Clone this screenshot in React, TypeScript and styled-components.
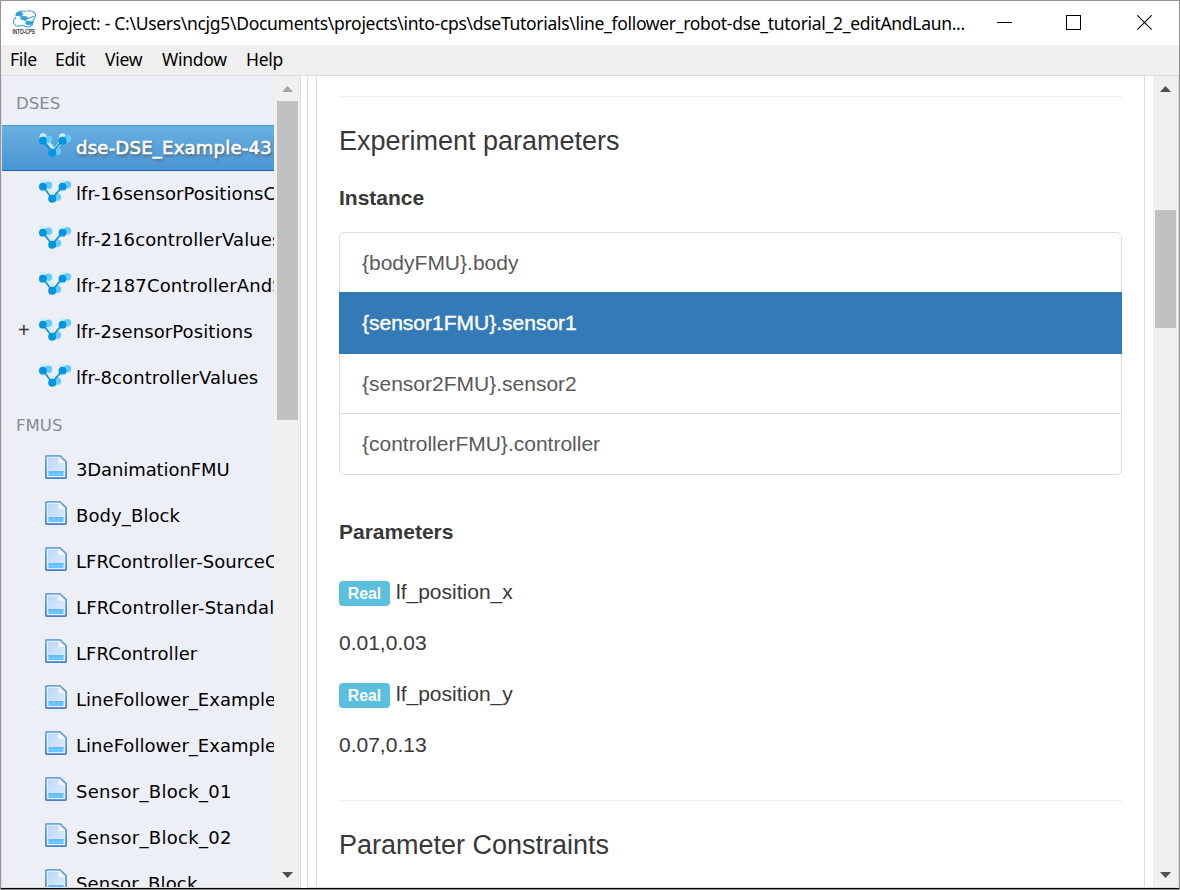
import React from "react";
import styled, { createGlobalStyle } from "styled-components";

const GlobalStyle = createGlobalStyle`
  * { box-sizing: border-box; }
  body { margin: 0; overflow: hidden; }
`;

const AppWindow = styled.div`
  width: 1180px;
  height: 890px;
  display: flex;
  flex-direction: column;
  background: #fff;
  border: 1px solid #949494;
  overflow: hidden;
`;

const TitleBar = styled.header`
  height: 44px;
  flex: none;
  display: flex;
  align-items: center;
  padding-left: 11px;
  font-family: "Noto Sans", "Open Sans", sans-serif;
  font-size: 17.5px;
  color: #000;
`;

const TitleText = styled.div`
  width: 941px;
  flex: none;
  padding: 0 0 1px 4px;
  white-space: nowrap;
  letter-spacing: -0.3px;
`;

const WindowControls = styled.div`
  display: flex;
  gap: 54px;
  padding-left: 19px;
`;

const MenuBar = styled.nav`
  height: 31px;
  flex: none;
  display: flex;
  padding-left: 9px;
  line-height: 29px;
  background: #efefef;
  border-bottom: 1px solid #dcdcdc;
  font-family: "Noto Sans", "Open Sans", sans-serif;
  font-size: 17.5px;
  color: #000;
`;

const MenuItem = styled.span<{ $width: number }>`
  width: ${(p) => p.$width}px;
  letter-spacing: -0.25px;
`;

const Workspace = styled.div`
  flex: 1;
  min-height: 0;
  display: flex;
  border-bottom: 1px solid #000;
`;

const Sidebar = styled.aside`
  width: 300px;
  flex: none;
  display: flex;
  background: #eceff5;
  border-left: 1px solid #dcdcdc;
  border-right: 1px solid #dcdcdc;
  border-bottom: 1px solid #dcdcdc;
`;

const Tree = styled.div`
  width: 272px;
  flex: none;
  padding-top: 3px;
  overflow: hidden;
  font-family: "DejaVu Sans", Verdana, sans-serif;
  font-size: 18px;
`;

const GroupTitle = styled.div`
  height: 46px;
  padding-left: 14px;
  line-height: 50px;
  font-size: 16.6px;
  color: #868b92;
`;

const Node = styled.div<{ $selected?: boolean }>`
  height: 46px;
  display: flex;
  align-items: center;
  border-top: 1px solid ${(p) => (p.$selected ? "#4b93cf" : "transparent")};
  border-bottom: 1px solid ${(p) => (p.$selected ? "#1f65ad" : "transparent")};
  background: ${(p) => (p.$selected ? "linear-gradient(#69b0e0, #4a95d3)" : "none")};
  color: ${(p) => (p.$selected ? "#fff" : "#000")};
  text-shadow: ${(p) => (p.$selected ? "1px 2px 3px #555" : "none")};
  -webkit-text-stroke: ${(p) => (p.$selected ? "0.6px #fff" : "0")};
`;

const Expander = styled.span`
  width: 36px;
  flex: none;
  padding: 0 0 3px 16px;
  font-family: "Liberation Sans", Arial, sans-serif;
  font-size: 20px;
  color: #333;
`;

const NodeIcon = styled.span`
  width: 38px;
  flex: none;
  display: flex;
  height: 44px;
`;

const NodeLabel = styled.span<{ $spacing?: number }>`
  padding-bottom: 2px;
  white-space: nowrap;
  letter-spacing: ${(p) => p.$spacing ?? 0}px;
`;

const ScrollTrack = styled.div<{ $width: number; $left: number; $right: number }>`
  width: ${(p) => p.$width}px;
  flex: none;
  display: flex;
  flex-direction: column;
  align-items: stretch;
  padding: 0 ${(p) => p.$right}px 0 ${(p) => p.$left}px;
  background: #f0f0f0;
`;

const ScrollArrow = styled.div`
  height: 25px;
  flex: none;
  display: flex;
  align-items: center;
  justify-content: center;
`;

const ScrollThumb = styled.div<{ $top: number; $height: number }>`
  margin-top: ${(p) => p.$top}px;
  height: ${(p) => p.$height}px;
  flex: none;
  background: #c1c1c1;
`;

const Spacer = styled.div`
  flex: 1;
`;

const MainPane = styled.main`
  flex: 1;
  display: flex;
  margin-left: 6px;
  border: solid #dcdcdc;
  border-width: 0 1px 1px 1px;
`;

const Content = styled.div`
  width: 829px;
  margin: 0 8px;
  padding: 20px 22px 0;
  border: solid #dcdcdc;
  border-width: 0 1px;
  overflow: hidden;
  font-family: "Liberation Sans", Arial, sans-serif;
  font-size: 21px;
  color: #383838;
`;

const Rule = styled.div`
  height: 1px;
  background: #eee;
`;

const SectionTitle = styled.h2`
  margin: 0;
  height: 86px;
  line-height: 88px;
  font-size: 27px;
  font-weight: 400;
`;

const FieldTitle = styled.h3`
  margin: 0;
  height: 30px;
  line-height: 30px;
  font-size: 21px;
  font-weight: 700;
`;

const InstanceList = styled.div`
  margin: 19px 0 42px;
  border: 1px solid #ddd;
  border-radius: 5px;
`;

const InstanceItem = styled.div<{ $active?: boolean; $divided?: boolean; $height: number }>`
  height: ${(p) => p.$height}px;
  line-height: ${(p) => (p.$active ? 62 : 60)}px;
  margin: 0 ${(p) => (p.$active ? "-1px" : "0")};
  padding-left: ${(p) => (p.$active ? 23 : 22)}px;
  border-top: ${(p) => (p.$divided ? "1px solid #ddd" : "0")};
  background: ${(p) => (p.$active ? "#337ab7" : "transparent")};
  color: ${(p) => (p.$active ? "#fff" : "#595959")};
  -webkit-text-stroke: ${(p) => (p.$active ? "0.4px #fff" : "0")};
`;

const ParameterList = styled.div`
  padding: 19px 0 30px;
`;

const ParameterRow = styled.div`
  height: 51px;
  display: flex;
  align-items: center;
  gap: 6px;
`;

const TypeLabel = styled.span`
  width: 51px;
  height: 25px;
  margin-top: 3px;
  line-height: 25px;
  border-radius: 4px;
  background: #5bc0de;
  color: #fff;
  font-size: 15.8px;
  font-weight: 700;
  text-align: center;
`;

const Logo = () => (
  <svg width="25" height="26" viewBox="0 0 25 26">
    <g transform="translate(0 -.8)">
      <g fill="none" stroke="#36a0d8" strokeWidth="1.1">
        <path d="M4 6.500C5 2 10 1 14 2.500M15 1.700C21 1 25 4 23 8S20 12 21 14" />
        <path d="M4 8C0 11 1 15 4 16.500C8 18 10 15 13 17C16 18.500 22 17 21 12" />
        <path d="M7 4L11 10L17 13.500M3.500 6L10 7M22 7L14 10" />
      </g>
      <g fill="#36a0d8">
        <ellipse cx="7.500" cy="4.700" rx="3.600" ry="2.100" />
        <ellipse cx="12" cy="8.900" rx="3.800" ry="2.100" />
        <ellipse cx="17" cy="13.700" rx="3.600" ry="2.100" />
      </g>
    </g>
    <text x="0.500" y="23.500" fontFamily="Liberation Sans" fontSize="7" fill="#222" stroke="#222" strokeWidth=".2" textLength="22.500" lengthAdjust="spacingAndGlyphs">INTO-CPS</text>
  </svg>
);

const DseIcon = () => (
  <svg width="34" height="44" viewBox="0 0 34 44">
    <g fill="#cdeeff">
      <path d="M6 11L16.500 24L26 12" fill="none" stroke="#cdeeff" strokeWidth="3" />
      <circle cx="5" cy="10.800" r="3.500" />
      <circle cx="24.500" cy="10.800" r="3.500" />
    </g>
    <g fill="#66ccff">
      <circle cx="10.500" cy="13.200" r="3.800" />
      <circle cx="29.500" cy="12.800" r="3.700" />
      <circle cx="19.500" cy="25.200" r="3.700" />
    </g>
    <path d="M5 14.500L14 26.500L24.500 14.500" fill="none" stroke="#0b91dd" strokeWidth="1.700" />
    <g fill="#0494e0">
      <circle cx="4.900" cy="14.700" r="3.900" />
      <circle cx="24.500" cy="14.700" r="3.900" />
      <circle cx="14.200" cy="26.800" r="4" />
    </g>
  </svg>
);

const FmuIcon = () => (
  <svg width="34" height="44" viewBox="0 0 34 44">
    <defs>
      <linearGradient id="page" x1="0" y1="0" x2="1" y2="1">
        <stop offset="0" stopColor="#bcd7fb" />
        <stop offset="1" stopColor="#dfedfe" />
      </linearGradient>
      <linearGradient id="edge" x1="0" y1="0" x2="0" y2="1">
        <stop offset="0" stopColor="#6ba4e0" />
        <stop offset="1" stopColor="#4a7cc8" />
      </linearGradient>
    </defs>
    <path d="M8.500 7.900H22L28.100 13.500V29.500Q28.100 30.100 27.500 30.100H8.500Q7.900 30.100 7.900 29.500V8.500Q7.900 7.900 8.500 7.900Z" fill="#e6f1ff" stroke="url(#edge)" strokeWidth="1.700" />
    <path d="M10 10H20.500V15H26V28.500H10Z" fill="url(#page)" />
    <path d="M21 9.500V14.500H26.500Z" fill="#f8fcff" />
    <rect x="10.500" y="23.500" width="15" height="4.500" fill="#6bc8ff" />
    <path d="M10.500 23.800H25.500" stroke="#4bb0f7" />
  </svg>
);

const Arrow = ({ down, color = "#505050" }: { down?: boolean; color?: string }) => (
  <svg width="11" height="6" viewBox="0 0 11 6">
    <path d={down ? "M0 0H11L5.500 6Z" : "M0 6H11L5.500 0Z"} fill={color} />
  </svg>
);

const menus = [
  { label: "File", width: 45 },
  { label: "Edit", width: 50 },
  { label: "View", width: 57 },
  { label: "Window", width: 84 },
  { label: "Help", width: 60 },
];

const dses = [
  { label: "dse-DSE_Example-43", selected: true, spacing: 0.25 },
  { label: "lfr-16sensorPositionsC", spacing: 0.07 },
  { label: "lfr-216controllerValues", spacing: 0.1 },
  { label: "lfr-2187ControllerAndS", spacing: 0.13 },
  { label: "lfr-2sensorPositions", children: true, spacing: 0.1 },
  { label: "lfr-8controllerValues", spacing: 0.1 },
];

const fmus = [
  { label: "3DanimationFMU", spacing: -0.1 },
  { label: "Body_Block", spacing: 0.1 },
  { label: "LFRController-SourceC", spacing: 0.06 },
  { label: "LFRController-Standalone", spacing: 0.2 },
  { label: "LFRController", spacing: 0.06 },
  { label: "LineFollower_Example", spacing: 0.03 },
  { label: "LineFollower_Example", spacing: 0.03 },
  { label: "Sensor_Block_01", spacing: 0.3 },
  { label: "Sensor_Block_02", spacing: 0.3 },
  { label: "Sensor_Block", spacing: 0.18 },
];

const instances = [
  { name: "{bodyFMU}.body", height: 59 },
  { name: "{sensor1FMU}.sensor1", height: 62, active: true },
  { name: "{sensor2FMU}.sensor2", height: 59 },
  { name: "{controllerFMU}.controller", height: 61, divided: true },
];

const parameters = [
  { name: "lf_position_x", value: "0.01,0.03" },
  { name: "lf_position_y", value: "0.07,0.13" },
];

export default function App() {
  return (
    <AppWindow>
      <GlobalStyle />
      <TitleBar>
        <Logo />
        <TitleText>
          Project: - C:\Users\ncjg5\Documents\projects\into-cps\dseTutorials\line_follower_robot-dse_tutorial_2_editAndLaun...
        </TitleText>
        <WindowControls>
          <svg width="15" height="16"><path d="M0 7.500H15" stroke="#000" /></svg>
          <svg width="17" height="16"><rect x=".5" y=".5" width="14" height="14" fill="none" stroke="#000" /></svg>
          <svg width="16" height="16"><path d="M.3 .3L14.700 14.700M14.700 .3L.3 14.700" stroke="#000" strokeWidth="1.100" /></svg>
        </WindowControls>
      </TitleBar>
      <MenuBar>
        {menus.map((m) => (
          <MenuItem key={m.label} $width={m.width}>{m.label}</MenuItem>
        ))}
      </MenuBar>
      <Workspace>
        <Sidebar>
          <Tree>
            <GroupTitle>DSES</GroupTitle>
            {dses.map((d) => (
              <Node key={d.label} $selected={d.selected}>
                <Expander>{d.children ? "+" : ""}</Expander>
                <NodeIcon><DseIcon /></NodeIcon>
                <NodeLabel $spacing={d.spacing}>{d.label}</NodeLabel>
              </Node>
            ))}
            <GroupTitle>FMUS</GroupTitle>
            {fmus.map((f, i) => (
              <Node key={i}>
                <Expander />
                <NodeIcon><FmuIcon /></NodeIcon>
                <NodeLabel $spacing={f.spacing}>{f.label}</NodeLabel>
              </Node>
            ))}
          </Tree>
          <ScrollTrack $width={26} $left={3} $right={2}>
            <ScrollArrow><Arrow color="#a3a3a3" /></ScrollArrow>
            <ScrollThumb $top={0} $height={319} />
            <Spacer />
            <ScrollArrow><Arrow down /></ScrollArrow>
          </ScrollTrack>
        </Sidebar>
        <MainPane>
          <Content>
            <Rule />
            <SectionTitle>Experiment parameters</SectionTitle>
            <FieldTitle>Instance</FieldTitle>
            <InstanceList>
              {instances.map((it) => (
                <InstanceItem key={it.name} $active={it.active} $divided={it.divided} $height={it.height}>
                  {it.name}
                </InstanceItem>
              ))}
            </InstanceList>
            <FieldTitle>Parameters</FieldTitle>
            <ParameterList>
              {parameters.map((p) => (
                <React.Fragment key={p.name}>
                  <ParameterRow>
                    <TypeLabel>Real</TypeLabel>
                    {p.name}
                  </ParameterRow>
                  <ParameterRow>{p.value}</ParameterRow>
                </React.Fragment>
              ))}
            </ParameterList>
            <Rule />
            <SectionTitle>Parameter Constraints</SectionTitle>
          </Content>
          <ScrollTrack $width={25} $left={2} $right={2}>
            <ScrollArrow><Arrow /></ScrollArrow>
            <ScrollThumb $top={109} $height={118} />
            <Spacer />
            <ScrollArrow><Arrow down /></ScrollArrow>
          </ScrollTrack>
        </MainPane>
      </Workspace>
    </AppWindow>
  );
}
